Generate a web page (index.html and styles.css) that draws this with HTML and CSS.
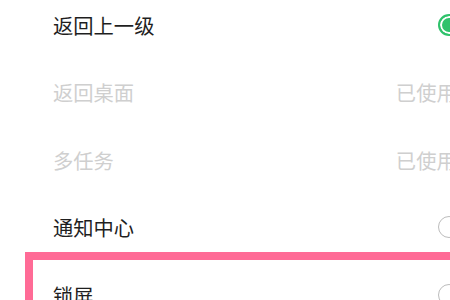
FILE: index.html
```html
<!DOCTYPE html>
<html lang="zh-CN">
<head>
<meta charset="utf-8">
<link rel="stylesheet" href="styles.css">
</head>
<body>
<div class="list">
  <div class="row">
    <span class="label">返回上一级</span>
    <span class="radio checked"></span>
  </div>
  <div class="row disabled">
    <span class="label">返回桌面</span>
    <span class="status">已使用中</span>
  </div>
  <div class="row disabled">
    <span class="label">多任务</span>
    <span class="status">已使用中</span>
  </div>
  <div class="row">
    <span class="label">通知中心</span>
    <span class="radio"></span>
  </div>
  <div class="row">
    <span class="label">锁屏</span>
    <span class="radio"></span>
  </div>
</div>
<div class="highlight"></div>
</body>
</html>
```
FILE: styles.css
```css
html, body {
  margin: 0;
  padding: 0;
  width: 450px;
  height: 300px;
  overflow: hidden;
  background: #ffffff;
}
body {
  position: relative;
  font-family: "Noto Sans CJK SC", "Noto Sans", sans-serif;
}
.list {
  width: 480px;
  margin-top: -9px;
  display: flex;
  flex-direction: column;
}
.row {
  height: 67.5px;
  display: flex;
  align-items: center;
  justify-content: space-between;
  padding: 0 20px 0 53px;
  box-sizing: border-box;
  flex-shrink: 0;
}
.label {
  font-size: 20.3px;
  color: #1f1f1f;
  line-height: 1;
}
.row.disabled .label,
.status {
  color: #cfcfcf;
}
.status {
  font-size: 20.3px;
  line-height: 1;
  margin-left: auto;
  margin-right: -17px;
  white-space: nowrap;
}
.radio {
  width: 22px;
  height: 22px;
  border-radius: 50%;
  border: 1.5px solid #bcbcbc;
  box-sizing: border-box;
  flex-shrink: 0;
}
.radio.checked {
  border: 2px solid #2fc26b;
  background: #2fc26b;
  box-shadow: inset 0 0 0 2px #ffffff;
}
.highlight {
  position: absolute;
  left: 25px;
  top: 252px;
  width: 500px;
  height: 100px;
  border: 8px solid #ff6b96;
}
```
